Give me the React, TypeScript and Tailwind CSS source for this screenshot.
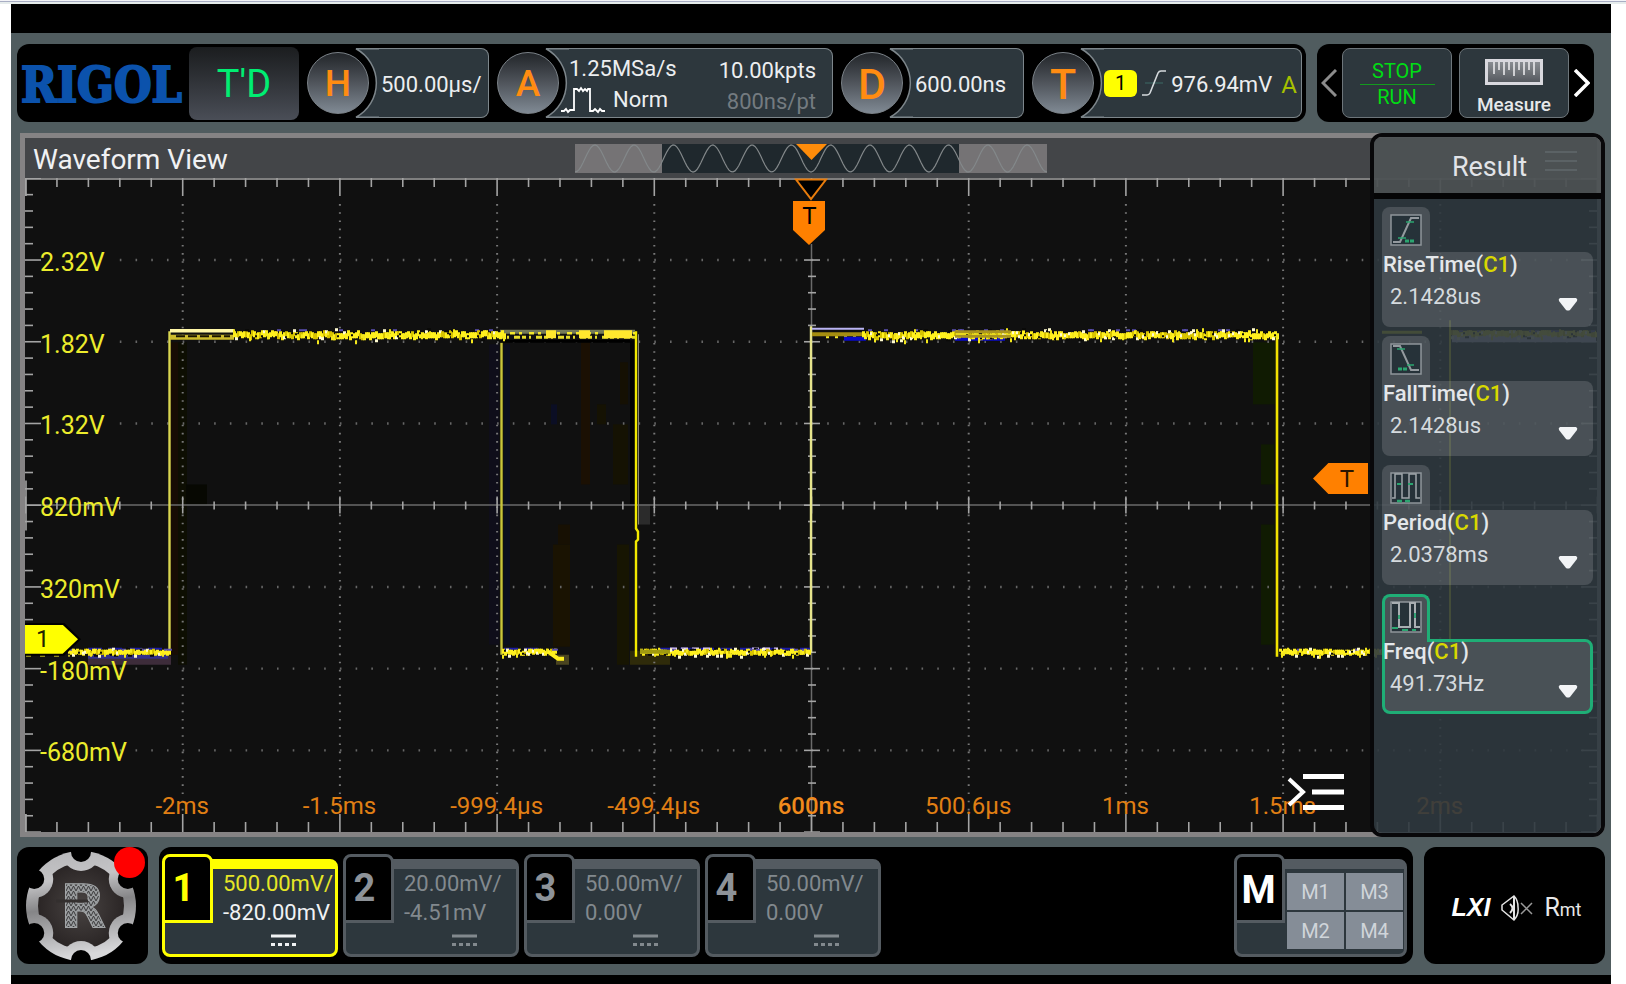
import React from "react";

/* ---------- helpers ---------- */

function makeRandom(seed: number) {
  let s = seed;
  return () => {
    s = (s * 1664525 + 1013904223) % 4294967296;
    return s / 4294967296;
  };
}

type Mark = { x: number; y: number; w: number; h: number; c: string };

function noiseBand(x0: number, x1: number, y: number, amp: number, seed: number): Mark[] {
  const rnd = makeRandom(seed);
  const out: Mark[] = [];
  for (let x = x0; x < x1; x += 2) {
    out.push({
      x,
      y: Math.round(y - 3 + (rnd() - 0.5) * amp * 0.6),
      w: 3,
      h: amp > 5 ? 6 : 5,
      c: rnd() > 0.25 ? "#fff01e" : "#d8c400",
    });
    const r = rnd();
    const dy = Math.round((rnd() - 0.5) * 2 * amp) - 1;
    if (r < 0.2) out.push({ x, y: y + dy, w: 3, h: 3, c: "#fffbd0" });
    else if (r < 0.38) out.push({ x, y: y + dy, w: 2, h: 4, c: "#f4e81c" });
    else if (r < 0.58) out.push({ x, y: y + dy, w: 4, h: 2, c: "#0a0a08" });
    else if (r < 0.66) out.push({ x, y: y - amp, w: 4, h: 2, c: "#5a4fb0" });
  }
  return out;
}

const cols = [0, 1, 2, 3, 4, 5, 6, 7, 8, 9, 10].map((k) => 25.5 + 157.2 * k);
const rows = [-4, -3, -2, -1, 0, 1, 2, 3, 4].map((k) => 504.7 + 81.6 * k);
const minorX = Array.from({ length: 51 }, (_, i) => 25.5 + 31.44 * i);
const minorY = Array.from({ length: 41 }, (_, i) => 178.3 + 16.32 * i);

const marks: Mark[] = [
  ...noiseBand(68, 169, 652, 4, 3),
  ...noiseBand(233, 504, 335, 6, 11),
  ...noiseBand(862, 1277, 335, 6, 29),
  ...noiseBand(502, 556, 652, 4, 5),
  ...noiseBand(640, 810, 652, 4, 17),
  ...noiseBand(1279, 1450, 652, 4, 23),
  ...noiseBand(1451, 1596, 334, 4, 31),
];

const shades: Mark[] = [
  { x: 170, y: 342, w: 8, h: 312, c: "#170c04" },
  { x: 178, y: 342, w: 9, h: 322, c: "#0d0e02" },
  { x: 186, y: 484, w: 21, h: 20, c: "#070802" },
  { x: 489, y: 344, w: 10, h: 300, c: "#0f0e1a" },
  { x: 504, y: 344, w: 6, h: 300, c: "#0b0e1e" },
  { x: 581, y: 342, w: 9, h: 142, c: "#1b1003" },
  { x: 551, y: 404, w: 6, h: 20, c: "#0b0e24" },
  { x: 597, y: 404, w: 9, h: 20, c: "#151203" },
  { x: 613, y: 424, w: 15, h: 60, c: "#151203" },
  { x: 620, y: 362, w: 8, h: 42, c: "#151003" },
  { x: 630, y: 340, w: 6, h: 164, c: "#020202" },
  { x: 558, y: 524, w: 12, h: 20, c: "#171003" },
  { x: 553, y: 544, w: 17, h: 102, c: "#1a1302" },
  { x: 617, y: 544, w: 12, h: 120, c: "#171502" },
  { x: 638, y: 504, w: 12, h: 20, c: "#2b2b2b" },
  { x: 1253, y: 342, w: 22, h: 62, c: "#101b02" },
  { x: 1261, y: 444, w: 13, h: 40, c: "#101b02" },
  { x: 1261, y: 524, w: 13, h: 120, c: "#101b02" },
  { x: 88, y: 655, w: 83, h: 9, c: "#3d2c3a" },
  { x: 88, y: 654, w: 80, h: 4, c: "#33308a" },
  { x: 556, y: 654, w: 13, h: 10, c: "#4a4420" },
  { x: 630, y: 650, w: 40, h: 14, c: "#2f2b0a" },
];

function Rects({ items }: { items: Mark[] }) {
  return (
    <>
      {items.map((m, i) => (
        <rect key={i} x={m.x} y={m.y} width={m.w} height={m.h} fill={m.c} />
      ))}
    </>
  );
}

/* ---------- waveform ---------- */

function PlotDrawing() {
  return (
    <svg className="block h-full w-full" viewBox="25 178 1572 653" preserveAspectRatio="none" aria-hidden="true">
      <Rects items={shades} />
      <g stroke="#8a8a8a" strokeWidth="1.6">
        {cols.slice(1, 10).map((x, i) =>
          i === 4 ? null : (
            <line key={i} x1={x} x2={x} y1="204" y2="812" strokeWidth="2" strokeDasharray="1.6 6.56" stroke="#777" />
          )
        )}
        {rows.slice(1, 8).map((y, i) =>
          i === 3 ? null : (
            <line key={i} y1={y} y2={y} x1="119.8" x2="1586" strokeWidth="2.4" strokeDasharray="1.6 14.12" stroke="#666" />
          )
        )}
      </g>
      <g stroke="#7c7c7c" strokeWidth="1.5">
        <line x1="26" x2="1597" y1="504.5" y2="504.5" stroke="#6a6a6a" />
        <line x1="811.5" x2="811.5" y1="244" y2="831" stroke="#6a6a6a" />
      </g>
      <g stroke="#a4a4a4" strokeWidth="1.6">
        {minorX.map((x, i) => {
          const major = i % 5 === 0;
          return (
            <g key={i}>
              <line x1={x} x2={x} y1="178" y2={major ? 196 : 187} />
              <line x1={x} x2={x} y1={major ? 813 : 821} y2="831" />
              <line x1={x} x2={x} y1={major ? 496 : 501} y2={major ? 513 : 509} />
            </g>
          );
        })}
        {minorY.map((y, i) => {
          const major = i % 5 === 0;
          return (
            <g key={i}>
              <line y1={y} y2={y} x1="25" x2={major ? 41 : 33} />
              <line y1={y} y2={y} x1={major ? 1581 : 1589} x2="1597" />
              {i > 4 && <line y1={y} y2={y} x1={major ? 804 : 808} x2={major ? 820 : 816} />}
            </g>
          );
        })}
        <path d="M25 179H1597M26 178V196M26 480V530M26 813V831" fill="none" />
      </g>
      <g fill="none" strokeWidth="2">
        <path d="M169.500 652V331" stroke="#d9d650" strokeWidth="2.4" />
        <path d="M501.500 340V654" stroke="#c9c43a" strokeWidth="2.4" />
        <path d="M636 331V528l2 3v8l-2 2V656" stroke="#f2e900" strokeWidth="2.4" />
        <path d="M638.500 334V524" stroke="#8a8878" strokeWidth="1" />
        <path d="M811 652V326" stroke="#e6e48c" strokeWidth="2.4" />
        <path d="M1277 334V656" stroke="#f0e400" strokeWidth="2.6" />
        <path d="M1450 652V320" stroke="#ffff00" strokeWidth="2" />
        <path d="M1280 652h170M1451 332h145M1382 332h40" stroke="#ffff00" strokeWidth="3" />
        <path d="M1452 338h144" stroke="#d8c8f0" strokeWidth="8" />
        {/* flat tops drawn as doubled traces */}
        <path d="M170 330.500h64" stroke="#fff7a8" strokeWidth="3.500" />
        <path d="M170 337h64" stroke="#cdbb2c" strokeWidth="5" />
        <path d="M176 336h54" stroke="#191400" strokeDasharray="9 3" strokeWidth="2" />
        <path d="M500 331.500h135" stroke="#747a58" strokeWidth="4" />
        <path d="M500 337h135" stroke="#e8de2c" strokeWidth="3" strokeDasharray="4 3 2 5 6 2" />
        <path d="M500 333h135" stroke="#f4e82c" strokeWidth="2.500" strokeDasharray="3 7 5 4" />
        <path d="M546 334h10M579 334h11M604 334h28" stroke="#ffe82e" strokeWidth="8" />
        <path d="M500 341h130" stroke="#000" strokeWidth="3" />
        <path d="M812 328.500h52" stroke="#bab4f4" strokeWidth="2" />
        <path d="M812 334h52" stroke="#a48d10" strokeWidth="4" />
        <path d="M826 337h38" stroke="#f4e82c" strokeWidth="2" strokeDasharray="3 6" />
        <path d="M844 338.500h22M955 338.500h50" stroke="#0a0ac8" strokeWidth="4" />
        <path d="M26 655h44" stroke="#b8b020" strokeDasharray="5 9" />
        <path d="M88 648h80M504 648h40M660 648h150" stroke="#1a1aa8" strokeWidth="2" strokeDasharray="14 6" />
        <path d="M670 648h40M752 648h26" stroke="#dcc8ff" strokeWidth="2.500" strokeDasharray="7 4" />
      </g>
      <Rects items={marks} />
      <path d="M955 331.500h56M955 336h56" stroke="#a99420" strokeWidth="3" />
      <path d="M548 651l10 7h6" stroke="#fff01e" strokeWidth="4" fill="none" />
      <path d="M640 651h30" stroke="#a09a10" strokeWidth="4" />
    </svg>
  );
}

const voltLabels = ["2.32V", "1.82V", "1.32V", "820mV", "320mV", "-180mV", "-680mV"];
const timeLabels = ["-2ms", "-1.5ms", "-999.4µs", "-499.4µs", "600ns", "500.6µs", "1ms", "1.5ms", "2ms"];

function Plot() {
  return (
    <div className="relative min-h-0 flex-1 bg-[#101010]">
      <div className="absolute inset-0">
        <PlotDrawing />
      </div>
      {voltLabels.map((t, i) => (
        <span
          key={t}
          className="absolute left-[15px] -translate-y-1/2 pt-[6px] text-[25px] leading-7 text-[#ecec2c]"
          style={{ top: `${12.5 * (i + 1)}%` }}
        >
          {t}
        </span>
      ))}
      {timeLabels.map((t, i) => (
        <span
          key={t}
          className={`absolute bottom-3 -translate-x-1/2 text-2xl leading-7 ${i === 4 ? "font-medium text-[#f08a1c]" : "text-[#e07f14]"}`}
          style={{ left: `${10 * (i + 1)}%` }}
        >
          {t}
        </span>
      ))}
      <svg className="absolute top-0 left-1/2 h-[68px] w-9 -translate-x-1/2" viewBox="794 178 36 68" aria-hidden="true">
        <path d="M797 179.500H827L812 199Z" fill="#000" stroke="#e87c0c" strokeWidth="2" />
        <path d="M794 201H826V230L810 245L794 230Z" fill="#ff8000" />
      </svg>
      <span className="absolute top-[24px] left-1/2 -translate-x-1/2 pr-[3px] text-2xl leading-7 text-black">T</span>
      <div className="absolute top-[285px] right-[229px] flex h-[31px] w-[55px] items-center justify-end bg-[#ff8000] pr-3.5 text-2xl leading-none text-[#2a1400] [clip-path:polygon(28%_0,100%_0,100%_100%,28%_100%,0_50%)]">
        T
      </div>
      <div className="absolute top-[68%] left-0 h-[33px] w-[56px] bg-black [clip-path:polygon(0_0,70%_0,100%_50%,70%_100%,0_100%)]">
        <div className="mt-0.5 flex h-[29px] w-[53px] items-center bg-[#ffff00] pl-[11px] text-2xl leading-none text-[#222200] [clip-path:polygon(0_0,71%_0,100%_50%,71%_100%,0_100%)]">
          1
        </div>
      </div>
      <button aria-label="Toggle result panel" className="absolute right-[252px] bottom-[22px]">
        <svg className="block h-10 w-[58px]" viewBox="0 0 58 40" fill="none" stroke="#fff" aria-hidden="true">
          <path d="M2 9L16 22L2 35" strokeWidth="4" />
          <path d="M16 6.500H57M25 22H57M16 37.500H57" strokeWidth="5" />
        </svg>
      </button>
    </div>
  );
}

function sinePath(x0: number, x1: number) {
  let d = "";
  for (let x = x0; x <= x1; x += 2) {
    const y = 14.5 - 13.5 * Math.cos(((x - 236) / 39.3) * 2 * Math.PI + Math.PI);
    d += `${d ? "L" : "M"}${x} ${y.toFixed(1)}`;
  }
  return d;
}

function MiniMap() {
  return (
    <svg className="h-[29px] w-[472px]" viewBox="0 0 472 29" aria-hidden="true">
      <rect width="472" height="29" fill="#757375" />
      <rect x="87" width="297" height="29" fill="#1f282d" />
      <path d={sinePath(0, 472)} fill="none" stroke="#83888a" strokeWidth="1.2" />
      <path d="M221 0H252L236.500 16Z" fill="#ff8c0a" />
    </svg>
  );
}

/* ---------- result panel ---------- */

type IconName = "rise" | "fall" | "period" | "freq";

function MeasureIcon({ name }: { name: IconName }) {
  return (
    <svg className="h-8 w-8" viewBox="0 0 32 32" fill="none" aria-hidden="true">
      <rect x="1" y="1" width="30" height="30" fill="#263239" stroke="#8f959a" strokeWidth="1.500" />
      {name === "rise" && (
        <>
          <path d="M3 28H10L21 4H29" stroke="#949a9f" strokeWidth="2" />
          <path d="M16 8h8M8 24h8" stroke="#2ba570" strokeWidth="1.500" />
          <path d="M15 27h9" stroke="#2ba570" strokeWidth="3" strokeDasharray="4 1" />
        </>
      )}
      {name === "fall" && (
        <>
          <path d="M3 3H10L21 27H29" stroke="#949a9f" strokeWidth="2" />
          <path d="M7 6h8M17 22h7" stroke="#2ba570" strokeWidth="1.500" />
          <path d="M8 26h9" stroke="#2ba570" strokeWidth="3" strokeDasharray="4 1" />
        </>
      )}
      {name === "period" && (
        <>
          <path d="M2 26H5V2H12V26H19V2H26V26H30" stroke="#a0a6aa" strokeWidth="1.500" />
          <path d="M7 12h4M18 12h5" stroke="#2ba570" strokeWidth="2" />
          <path d="M7 29h14" stroke="#2ba570" strokeWidth="2.500" strokeDasharray="5 3" />
        </>
      )}
      {name === "freq" && (
        <>
          <path d="M2 2H9V26H20V2H25V26H30" stroke="#a9aeb2" strokeWidth="2" />
          <path d="M9 14v4M25 12v5M2 27h6M12 29h6M22 29h4" stroke="#2ba570" strokeWidth="1.800" />
        </>
      )}
    </svg>
  );
}

function ResultCard({ icon, label, value, selected }: { icon: IconName; label: string; value: string; selected?: boolean }) {
  return (
    <button className="block w-full text-left">
      <span
        className={
          selected
            ? "relative z-10 -mb-[3px] flex h-12 w-12 justify-center rounded-t-lg border-x-[3px] border-t-[3px] border-[#1fae76] bg-[#495156] pt-1"
            : "flex h-[45px] w-12 justify-center rounded-t-lg bg-white/[0.14] pt-[7px]"
        }
      >
        <MeasureIcon name={icon} />
      </span>
      <span
        className={`flex h-[75px] flex-col rounded-lg rounded-tl-none border-[3px] ${
          selected ? "border-[#1fae76] bg-[#495156]" : "border-transparent bg-white/[0.14]"
        }`}
      >
        <span className="relative z-20 -mt-0.5 -ml-0.5 text-[22px] leading-6 font-medium text-[#e4e7ea]">
          {label}(<span className="text-[#d8d800]">C1</span>)
        </span>
        <span className="flex items-center justify-between pr-3 pl-[5px] text-[22px] leading-10 text-[#d5dade]">
          {value}
          <svg className="mt-3.5 h-[13px] w-5" viewBox="0 0 20 13" aria-hidden="true">
            <path d="M2 0H18Q20 1 19 3L12 12Q10 13 8 12L1 3Q0 1 2 0Z" fill="#f2f4f6" />
          </svg>
        </span>
      </span>
    </button>
  );
}

function ResultPanel() {
  return (
    <aside className="absolute inset-y-0 right-0 flex w-[235px] flex-col overflow-hidden rounded-xl border-4 border-[#08080a]">
      <div className="relative flex h-14 items-center justify-center bg-[#4d5254]/95 pt-1 pl-1 text-[27px] text-[#e2e4e8]">
        Result
        <svg className="absolute top-3 right-6 h-6 w-8" viewBox="0 0 32 24" stroke="#5b6265" strokeWidth="2" aria-hidden="true">
          <path d="M0 3H32M0 12H32M0 21H32" />
        </svg>
      </div>
      <div className="h-1.5 bg-[#050506]" />
      <div className="flex flex-1 flex-col gap-[9px] bg-[#2f383f]/90 px-2 pt-2">
        <ResultCard icon="rise" label="RiseTime" value="2.1428us" />
        <ResultCard icon="fall" label="FallTime" value="2.1428us" />
        <ResultCard icon="period" label="Period" value="2.0378ms" />
        <ResultCard icon="freq" label="Freq" value="491.73Hz" selected />
      </div>
    </aside>
  );
}

/* ---------- top bar ---------- */

function Knob({ letter, large, className, children }: { letter: string; large?: boolean; className: string; children: React.ReactNode }) {
  return (
    <button className={`flex items-center text-left ${className}`}>
      <span
        className={`z-10 flex h-[62px] w-[62px] shrink-0 items-center justify-center rounded-full border border-[#7b8288] bg-linear-to-b from-[#23262a] via-[#50555c] to-[#808a94] pt-0.5 font-medium text-[#ff8c12] ${
          large ? "text-[43px]" : "text-[37px]"
        }`}
      >
        {letter}
      </span>
      <svg className="-ml-3.5 h-[70px] w-6 shrink-0" viewBox="0 0 24 70" aria-hidden="true">
        <path d="M1 0.750A39 39 0 0 1 1 69.250H24V0.750Z" fill="#2d373d" />
        <path d="M24 0.750H1A39 39 0 0 1 1 69.250H24" fill="none" stroke="#7d868b" strokeWidth="1.500" />
      </svg>
      <span className="flex h-[70px] min-w-0 flex-1 items-center rounded-r-lg border-y border-r border-[#7d868b] bg-[#2d373d] text-[22px] whitespace-nowrap text-[#eceef0]">
        {children}
      </span>
    </button>
  );
}

function TopBar() {
  return (
    <header className="flex h-[78px] gap-[11px] pr-[11px]">
      <div className="flex min-w-0 flex-1 items-center gap-2 rounded-xl bg-black px-1">
        <div className="w-40 pt-1 font-['DejaVu_Serif_Condensed','DejaVu_Serif',serif] text-[48px] leading-none font-bold text-[#0b52ac] [-webkit-text-stroke:2px_#0b52ac]">RIGOL</div>
        <button className="h-[73px] w-[110px] rounded-lg bg-linear-to-b from-[#1b1d1f] to-[#4a4e57] pt-0.5 text-[38px] text-[#00ee72]">T'D</button>
        <Knob letter="H" className="w-[182px]">
          <span className="pt-0.5 pl-0.5">500.00µs/</span>
        </Knob>
        <Knob letter="A" className="w-[336px]">
          <span className="flex flex-1 items-center justify-between pt-0.5 pr-4">
            <span className="flex flex-col leading-[31px]">
              <span>1.25MSa/s</span>
              <span className="-ml-2 flex items-center gap-2">
                <svg className="h-7 w-11" viewBox="0 0 44 28" fill="none" stroke="#fff" strokeWidth="1.800" aria-hidden="true">
                  <path d="M0 25h3l2-2 2 3 2-2h4V3h3l2 2 2-3 2 3 2-2 2 2 1-2h2V25h3l2-2 3 3 2-3 2 2h3" />
                </svg>
                Norm
              </span>
            </span>
            <span className="flex flex-col pt-1 text-right leading-[31px]">
              <span>10.00kpts</span>
              <span className="text-[#747b80]">800ns/pt</span>
            </span>
          </span>
        </Knob>
        <Knob letter="D" large className="w-[183px]">
          <span className="pt-0.5 pl-0.5">600.00ns</span>
        </Knob>
        <Knob letter="T" large className="min-w-0 flex-1">
          <span className="flex flex-1 items-center gap-1">
            <span className="rounded-md bg-[#ffff00] px-[11px] text-xl leading-[27px] text-black">1</span>
            <svg className="h-7 w-[26px]" viewBox="0 0 26 28" fill="none" aria-hidden="true">
              <path d="M4 14H22" stroke="#3d6a66" />
              <path d="M1 26H6Q8 26 9 24L17 4Q18 2 20 2H25" stroke="#d5dadd" strokeWidth="1.600" />
            </svg>
            <span className="pt-0.5">976.94mV</span>
            <span className="mr-1 ml-auto pt-1 text-[24px] text-[#a6c000]">A</span>
          </span>
        </Knob>
      </div>
      <nav className="flex w-[277px] items-center justify-between rounded-xl bg-black px-1">
        <button aria-label="Previous">
          <svg className="h-7 w-4" viewBox="0 0 16 28" fill="none" stroke="#8c8c8c" strokeWidth="3" aria-hidden="true">
            <path d="M15 1L2 14L15 27" />
          </svg>
        </button>
        <div className="flex gap-[7px]">
          <button className="flex h-[70px] w-[110px] flex-col items-center justify-center rounded-lg border border-[#6d757a] bg-[#2d373d] pt-px text-xl leading-6 text-[#00dc14]">
            <span>STOP</span>
            <span className="mt-px w-[75px] border-t border-[#139a1e]" />
            <span>RUN</span>
          </button>
          <button className="flex h-[70px] w-[110px] flex-col items-center justify-end gap-2 rounded-lg border border-[#6d757a] bg-[#2d373d] text-[19px] leading-6 font-medium text-[#e6e8ea]">
            <svg className="h-[26px] w-[58px]" viewBox="0 0 58 26" aria-hidden="true">
              <defs>
                <linearGradient id="ruler" x1="0" y1="0" x2="0" y2="1">
                  <stop offset="0" stopColor="#8d9196" />
                  <stop offset="1" stopColor="#52565c" />
                </linearGradient>
              </defs>
              <rect x="1.500" y="1.500" width="55" height="23" fill="url(#ruler)" stroke="#d8d8de" strokeWidth="3" />
              <path d="M9 3V15M14 3V11M19 3V16M24 3V11M29 3V17M34 3V11M39 3V16M44 3V11M49 3V16" stroke="#f0f0f2" strokeWidth="1.500" />
            </svg>
            Measure
          </button>
        </div>
        <button aria-label="Next">
          <svg className="h-7 w-4" viewBox="0 0 16 28" fill="none" stroke="#fff" strokeWidth="3.500" aria-hidden="true">
            <path d="M1 1L14 14L1 27" />
          </svg>
        </button>
      </nav>
    </header>
  );
}

/* ---------- bottom bar ---------- */

function GearLogo() {
  const notches = [30, 90, 150, 210, 270, 330].map((a) => ({
    x: 55 + 54 * Math.cos((a * Math.PI) / 180),
    y: 55 + 54 * Math.sin((a * Math.PI) / 180),
  }));
  return (
    <svg className="h-[110px] w-[110px]" viewBox="0 0 110 110" aria-hidden="true">
      <defs>
        <linearGradient id="steel" x1="0" y1="0" x2="0.150" y2="1">
          <stop offset="0" stopColor="#b5b5b7" />
          <stop offset="0.300" stopColor="#c4c4c6" />
          <stop offset="0.550" stopColor="#858587" />
          <stop offset="1" stopColor="#d8d8da" />
        </linearGradient>
        <radialGradient id="core">
          <stop offset="0" stopColor="#494443" />
          <stop offset="1" stopColor="#221d1d" />
        </radialGradient>
        <pattern id="weave" width="5" height="5" patternUnits="userSpaceOnUse">
          <rect width="5" height="5" fill="#9a9d9f" />
          <path d="M0 5L2.500 0L5 5" stroke="#3a393a" fill="none" />
        </pattern>
        <mask id="ring">
          <circle cx="55" cy="55" r="55" fill="#fff" />
          {notches.map((n, i) => (
            <circle key={i} cx={n.x} cy={n.y} r="10" fill="#000" />
          ))}
        </mask>
        <mask id="hole">
          <circle cx="55" cy="55" r="43" fill="#fff" />
          {notches.map((n, i) => (
            <circle key={i} cx={n.x} cy={n.y} r="19" fill="#000" />
          ))}
        </mask>
      </defs>
      <rect width="110" height="110" fill="url(#steel)" mask="url(#ring)" />
      <rect width="110" height="110" fill="url(#core)" mask="url(#hole)" />
      <text x="57" y="77" textAnchor="middle" fontFamily="DejaVu Sans" fontWeight="700" fontSize="60" fill="url(#weave)" stroke="#a2a5a7" strokeWidth="1">
        R
      </text>
      <path d="M30 50H62" stroke="#332f2e" strokeWidth="3" />
    </svg>
  );
}

function Channel({ n, scale, offset, on }: { n: number; scale: string; offset: string; on?: boolean }) {
  return (
    <button className="relative pt-[5px] text-left">
      <span
        className={`flex h-[98px] w-[176px] flex-col overflow-hidden rounded-lg border-[3px] border-t-[10px] bg-[#2d373d] text-[22px] leading-[29px] whitespace-nowrap ${
          on ? "border-[#ffff00] text-[#f0f2f4]" : "border-[#545b61] text-[#82898e]"
        }`}
      >
        <span className={on ? "pl-[58px] text-[#e6e626]" : "pl-[58px]"}>{scale}</span>
        <span className="pl-[58px]">{offset}</span>
        <svg className="mt-[7px] ml-[106px] h-3.5 w-[25px]" viewBox="0 0 25 14" stroke="currentColor" aria-hidden="true">
          <path d="M0 2H25" strokeWidth="3" />
          <path d="M0 10.500H25" strokeWidth="3" strokeDasharray="4 3" />
        </svg>
      </span>
      <span
        className={`absolute top-0 left-0 flex h-[69px] w-[51px] items-center justify-center rounded-t-lg border-[3px] bg-black pr-2 text-[38px] font-bold ${
          on ? "border-[#ffff00] text-[#ffff00]" : "border-[#545b61] text-[#8d9298]"
        }`}
      >
        {n}
      </span>
    </button>
  );
}

function BottomBar() {
  return (
    <footer className="flex h-[117px] gap-[11px]">
      <button aria-label="System menu" className="relative flex w-[131px] items-center justify-center rounded-xl bg-black pr-1">
        <GearLogo />
        <span className="absolute top-0 right-[3px] h-[31px] w-[31px] rounded-full bg-[#ff0000]" />
      </button>
      <div className="flex min-w-0 flex-1 items-start gap-[5px] rounded-xl bg-black pt-[7px] pr-1.5 pl-[3px]">
        <Channel n={1} scale="500.00mV/" offset="-820.00mV" on />
        <Channel n={2} scale="20.00mV/" offset="-4.51mV" />
        <Channel n={3} scale="50.00mV/" offset="0.00V" />
        <Channel n={4} scale="50.00mV/" offset="0.00V" />
        <div className="relative ml-auto pt-[5px]">
          <div className="h-[98px] w-[173px] rounded-lg border-[3px] border-t-[10px] border-[#545b61] bg-[#2d373d] pt-1 pr-px pl-[50px]">
            <div className="grid h-[76px] grid-cols-2 gap-0.5 text-xl text-[#d0d5da]">
              {["M1", "M3", "M2", "M4"].map((m) => (
                <button key={m} className="bg-[#858d97]">
                  {m}
                </button>
              ))}
            </div>
          </div>
          <span className="absolute top-0 left-0 flex h-[69px] w-[51px] items-center justify-center rounded-t-lg border-[3px] border-[#545b61] bg-black pr-0.5 pt-1 text-[39px] leading-none font-bold text-white">
            M
          </span>
        </div>
      </div>
      <div className="flex w-[181px] items-center justify-center gap-[11px] rounded-xl bg-black pt-1 text-[#e8e8e8]">
        <span className="pl-1 font-['Liberation_Sans',sans-serif] text-[25px] leading-none font-bold text-white italic">LXI</span>
        <svg className="h-[26px] w-8" viewBox="0 0 32 26" fill="none" stroke="#e4e4e4" strokeWidth="1.500" aria-hidden="true">
          <path d="M1 10V15L13 25Q18 20 17 12Q17 5 13 1Z" />
          <path d="M13 1V25M9 9Q14 13 9 18" strokeWidth="2" />
          <path d="M20 8L31 19M31 8L20 19" stroke="#9a9a9a" />
        </svg>
        <span className="text-[18px] leading-none">
          <span className="text-[25px]">R</span>mt
        </span>
      </div>
    </footer>
  );
}

/* ---------- screen ---------- */

export default function App() {
  return (
    <div className="flex min-h-screen flex-col bg-white font-['Roboto',sans-serif]">
      <div className="h-1 border-t border-b-2 border-t-[#f4f4f8] border-b-[#e6ecec] bg-[#a9aec4]" />
      <div className="mr-[15px] ml-[11px] flex flex-1 flex-col bg-black pt-[29px] pb-[9px]">
        <div className="flex flex-1 flex-col bg-[#505c5f] px-1.5 py-[11px]">
          <TopBar />
          <main className="relative mt-[11px] mb-2.5 ml-[3px] flex min-h-[704px] flex-1 flex-col rounded-r-xl bg-[#858384] py-[5px] pr-2 pl-[5px]">
            <div className="relative flex h-10 items-center bg-[#434548] pt-[3px] pl-2 text-[28px] text-[#f0f1f3]">
              Waveform View
              <div className="absolute inset-0 flex items-center justify-center">
                <MiniMap />
              </div>
            </div>
            <Plot />
            <ResultPanel />
          </main>
          <BottomBar />
        </div>
      </div>
    </div>
  );
}
